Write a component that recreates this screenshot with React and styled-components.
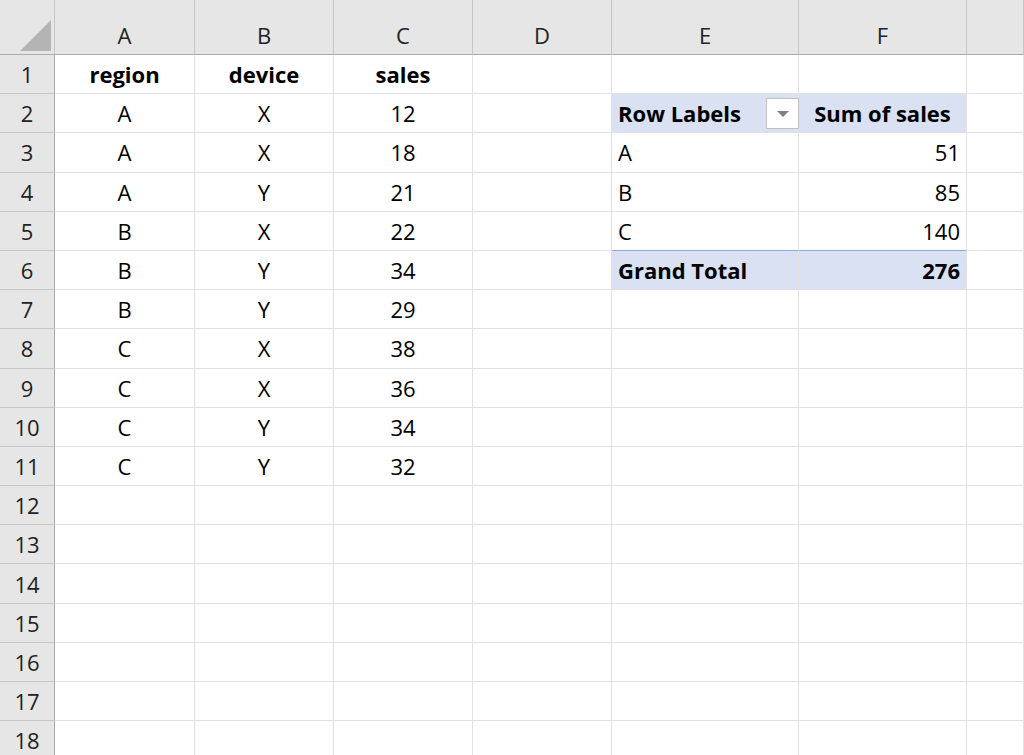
import React from 'react';
import styled, { createGlobalStyle } from 'styled-components';

const Global = createGlobalStyle`
  html, body { margin: 0; padding: 0; background: #fff; overflow: hidden; }
  body { font-family: "Open Sans", "Liberation Sans", sans-serif; }
`;

const COLS = ['A', 'B', 'C', 'D', 'E', 'F', ''];
const WIDTHS = '55px 140px 139px 139px 139px 187px 168px 57px';

const Sheet = styled.div`
  display: grid;
  grid-template-columns: ${WIDTHS};
  grid-template-rows: 55px repeat(18, 39.2px);
  width: 1024px;
  height: 755px;
  overflow: hidden;
`;

const Corner = styled.div`
  background: #e6e6e6;
  border-right: 1px solid #c6c6c6;
  border-bottom: 1px solid #ababab;
  position: relative;
  &::after {
    content: '';
    position: absolute;
    right: 3px;
    bottom: 3px;
    width: 0;
    height: 0;
    border-left: 31px solid transparent;
    border-bottom: 31px solid #b4b4b4;
  }
`;

const ColHead = styled.div`
  background: #e6e6e6;
  border-right: 1px solid #c6c6c6;
  border-bottom: 1px solid #ababab;
  display: flex;
  align-items: flex-end;
  justify-content: center;
  padding-bottom: 4px;
  font-size: 22px;
  color: #222;
  box-sizing: border-box;
`;

const RowHead = styled.div`
  background: #e6e6e6;
  border-right: 1px solid #ababab;
  border-bottom: 1px solid #c6c6c6;
  display: flex;
  align-items: center;
  justify-content: center;
  font-size: 22px;
  color: #222;
`;

const Cell = styled.div`
  border-right: 1px solid #e1e1e1;
  border-bottom: 1px solid ${p => (p.$topline ? '#8ea9db' : '#e1e1e1')};
  background: ${p => (p.$fill ? '#d9e1f2' : '#fff')};
  display: flex;
  align-items: center;
  justify-content: ${p => p.$align || 'center'};
  padding: 0 6px;
  font-size: 22px;
  font-weight: ${p => (p.$bold ? 700 : 400)};
  color: #000;
  white-space: nowrap;
  box-sizing: border-box;
  position: relative;
`;

const FilterBtn = styled.div`
  position: absolute;
  right: -1px;
  top: 4px;
  width: 33px;
  height: 31px;
  box-sizing: border-box;
  background: #fff;
  border: 1px solid #c0c0c0;
  display: flex;
  align-items: center;
  justify-content: center;
  &::after {
    content: '';
    border-left: 6px solid transparent;
    border-right: 6px solid transparent;
    border-top: 6px solid #808080;
  }
`;

const data = [
  ['region', 'device', 'sales'],
  ['A', 'X', 12], ['A', 'X', 18], ['A', 'Y', 21], ['B', 'X', 22], ['B', 'Y', 34],
  ['B', 'Y', 29], ['C', 'X', 38], ['C', 'X', 36], ['C', 'Y', 34], ['C', 'Y', 32],
];

const pivot = [
  null,
  ['Row Labels', 'Sum of sales', 'head'],
  ['A', 51], ['B', 85], ['C', 140],
  ['Grand Total', 276, 'total'],
];

export default function App() {
  const cells = [<Corner key="c" />];
  COLS.forEach((c, i) => cells.push(<ColHead key={'h' + i}>{c}</ColHead>));
  for (let r = 0; r < 18; r++) {
    cells.push(<RowHead key={'r' + r}>{r + 1}</RowHead>);
    const d = data[r] || [];
    const p = pivot[r];
    const fill = p && p[2];
    const nextTotal = pivot[r + 1] && pivot[r + 1][2] === 'total';
    for (let c = 0; c < 3; c++) {
      cells.push(<Cell key={`${r}-${c}`} $bold={r === 0}>{d[c]}</Cell>);
    }
    cells.push(<Cell key={`${r}-d`} />);
    cells.push(
      <Cell key={`${r}-e`} $align="flex-start" $fill={fill} $bold={fill} $topline={nextTotal}>
        {p && p[0]}
        {p && p[2] === 'head' && <FilterBtn />}
      </Cell>
    );
    cells.push(
      <Cell key={`${r}-f`} $align={fill === 'head' ? 'center' : 'flex-end'} $fill={fill} $bold={fill} $topline={nextTotal}>
        {p && p[1]}
      </Cell>
    );
    cells.push(<Cell key={`${r}-g`} />);
  }
  return (
    <>
      <Global />
      <Sheet>{cells}</Sheet>
    </>
  );
}
